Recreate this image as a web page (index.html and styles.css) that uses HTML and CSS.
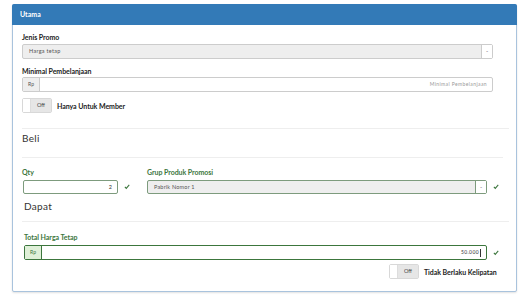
FILE: index.html
```html
<!DOCTYPE html>
<html>
<head>
<meta charset="utf-8">
<link rel="stylesheet" href="styles.css">
</head>
<body>
<div class="panel">
  <div class="panel-heading">Utama</div>
  <div class="panel-body">
    <div class="lbl lbl-first">Jenis Promo</div>
    <div class="select select-wide">
      <span class="select-text">Harga tetap</span>
      <span class="caret-btn">-</span>
    </div>
    <div class="lbl lbl-second">Minimal Pembelanjaan</div>
    <div class="input-group ig-wide">
      <span class="addon">Rp</span>
      <span class="ig-input placeholder">Minimal Pembelanjaan</span>
    </div>
    <div class="toggle-row">
      <div class="toggle"><span class="handle"></span><span class="off">Off</span></div>
      <span class="toggle-label">Hanya Untuk Member</span>
    </div>
    <div class="hr hr-1"></div>
    <div class="section-title beli">Beli</div>
    <div class="hr hr-2"></div>
    <div class="row-two">
      <div class="col-qty">
        <div class="lbl green">Qty</div>
        <div class="field-with-check">
          <div class="input qty">2</div>
          <svg class="check" viewBox="0 0 10 10"><path d="M0.8 5.4 L3.8 8.6 L9.4 2.2 L8.1 1 L3.8 6 L2.1 4.2 Z" fill="#3c763d"/></svg>
        </div>
      </div>
      <div class="col-grup">
        <div class="lbl green">Grup Produk Promosi</div>
        <div class="field-with-check">
          <div class="select select-grup">
            <span class="select-text">Pabrik Nomor 1</span>
            <span class="caret-btn">-</span>
          </div>
          <svg class="check" viewBox="0 0 10 10"><path d="M0.8 5.4 L3.8 8.6 L9.4 2.2 L8.1 1 L3.8 6 L2.1 4.2 Z" fill="#3c763d"/></svg>
        </div>
      </div>
    </div>
    <div class="section-title dapat">Dapat</div>
    <div class="hr hr-3"></div>
    <div class="lbl green lbl-total">Total Harga Tetap</div>
    <div class="field-with-check">
      <div class="input-group ig-total">
        <span class="addon addon-green">Rp</span>
        <span class="ig-input value">50.000<span class="cursor"></span></span>
      </div>
      <svg class="check" viewBox="0 0 10 10"><path d="M0.8 5.4 L3.8 8.6 L9.4 2.2 L8.1 1 L3.8 6 L2.1 4.2 Z" fill="#3c763d"/></svg>
    </div>
    <div class="toggle-row toggle-right">
      <div class="toggle"><span class="handle"></span><span class="off">Off</span></div>
      <span class="toggle-label">Tidak Berlaku Kelipatan</span>
    </div>
  </div>
</div>
</body>
</html>
```
FILE: styles.css
```css
* { box-sizing: border-box; }
html, body { margin: 0; padding: 0; background: #fff; }
body {
  font-family: "Lato", "Open Sans", sans-serif;
  color: #333;
  width: 522px;
  height: 297px;
  overflow: hidden;
}
.panel {
  margin: 4px 0 0 12px;
  width: 505px;
  height: 288px;
  border: 1px solid #a9c3dd;
  border-radius: 2px;
  box-shadow: 0 1px 2px rgba(0,0,0,0.12);
  background: #fff;
}
.panel-heading {
  height: 21px;
  background: #337ab7;
  color: #fff;
  font-size: 7px;
  font-weight: 700;
  line-height: 20px;
  padding-left: 8px;
  margin: -1px -1px 0 -1px;
  border-radius: 2px 2px 0 0;
}
.panel-body {
  padding: 0 0 0 9px;
}
.lbl {
  font-size: 7px;
  font-weight: 700;
  color: #222;
  line-height: 10px;
  height: 10px;
  letter-spacing: -0.05px;
}
.lbl-first { margin-top: 7px; margin-bottom: 2px; }
.lbl-second { margin-top: 7px; margin-bottom: 1px; }
.green { color: #3c763d; }
.select {
  height: 15px;
  display: flex;
  border: 1px solid #ccc;
  border-radius: 2px;
  background: #eee;
}
.select-wide { width: 471px; }
.select-text {
  flex: 1;
  font-size: 5.5px;
  line-height: 13px;
  padding-left: 6px;
  color: #555;
  letter-spacing: 0.3px;
}
.caret-btn {
  width: 11px;
  background: #fff;
  border-left: 1px solid #ccc;
  font-size: 6px;
  line-height: 12px;
  text-align: center;
  color: #555;
}
.input-group {
  height: 15px;
  display: flex;
  border: 1px solid #ccc;
  border-radius: 2px;
  background: #fff;
}
.ig-wide { width: 471px; }
.addon {
  width: 17px;
  background: #eee;
  border-right: 1px solid #ccc;
  font-size: 5px;
  line-height: 13px;
  text-align: center;
  color: #555;
}
.ig-input {
  flex: 1;
  font-size: 5px;
  line-height: 13px;
  text-align: right;
  padding-right: 5px;
  letter-spacing: 0.4px;
}
.placeholder { color: #999; }
.toggle-row {
  margin-top: 6px;
  display: flex;
  align-items: center;
  height: 15px;
}
.toggle {
  width: 30px;
  height: 15px;
  display: flex;
  border: 1px solid #d8d8d8;
  border-radius: 2px;
  box-shadow: inset 0 1px 2px rgba(0,0,0,0.12);
}
.handle {
  width: 8px;
  background: #fff;
  border-right: 1px solid #ddd;
}
.off {
  flex: 1;
  background: #e6e6e6;
  font-size: 5.5px;
  line-height: 13px;
  text-align: center;
  color: #444;
}
.toggle-label {
  margin-left: 5px;
  font-size: 7px;
  font-weight: 700;
  color: #222;
  letter-spacing: -0.05px;
}
.hr {
  height: 1px;
  background: #eee;
}
.hr-1 { margin-top: 15px; width: 487px; }
.section-title {
  font-size: 10px;
  line-height: 14px;
  color: #333;
  letter-spacing: 0.3px;
}
.beli { margin-top: 2px; }
.hr-2 { margin-top: 12px; width: 481px; }
.row-two {
  display: flex;
  margin-top: 9px;
}
.col-qty { width: 125px; }
.col-grup { flex: 1; }
.field-with-check {
  display: flex;
  align-items: center;
  margin-top: 3px;
}
.input {
  height: 14px;
  border: 1px solid #7d9b7d;
  border-radius: 2px;
  background: #fff;
}
.qty {
  width: 95px;
  margin-left: 1px;
  font-size: 5.5px;
  line-height: 12px;
  text-align: right;
  padding-right: 5px;
}
.check {
  width: 6px;
  height: 6px;
  margin-left: 6px;
}
.select-grup {
  width: 340px;
  height: 14px;
  border-color: #7d9b7d;
}
.select-grup .select-text { line-height: 12px; letter-spacing: 0.2px; }
.select-grup .caret-btn { line-height: 11px; border-left-color: #7d9b7d; }
.dapat { margin-top: 5px; margin-left: 2px; }
.hr-3 { margin-top: 8px; width: 487px; }
.lbl-total { margin-top: 10px; margin-left: 2px; }
.ig-total {
  width: 463px;
  margin-left: 2px;
  border: 1px solid #3c763d;
  height: 15px;
}
.addon-green {
  background: #dff0d8;
  border-right-color: #3c763d;
  color: #3c763d;
}
.value { color: #333; }
.cursor {
  display: inline-block;
  width: 1px;
  height: 8px;
  background: #333;
  vertical-align: middle;
  margin-left: 1px;
}
.toggle-right {
  margin-top: 4px;
  padding-left: 367px;
}
```
